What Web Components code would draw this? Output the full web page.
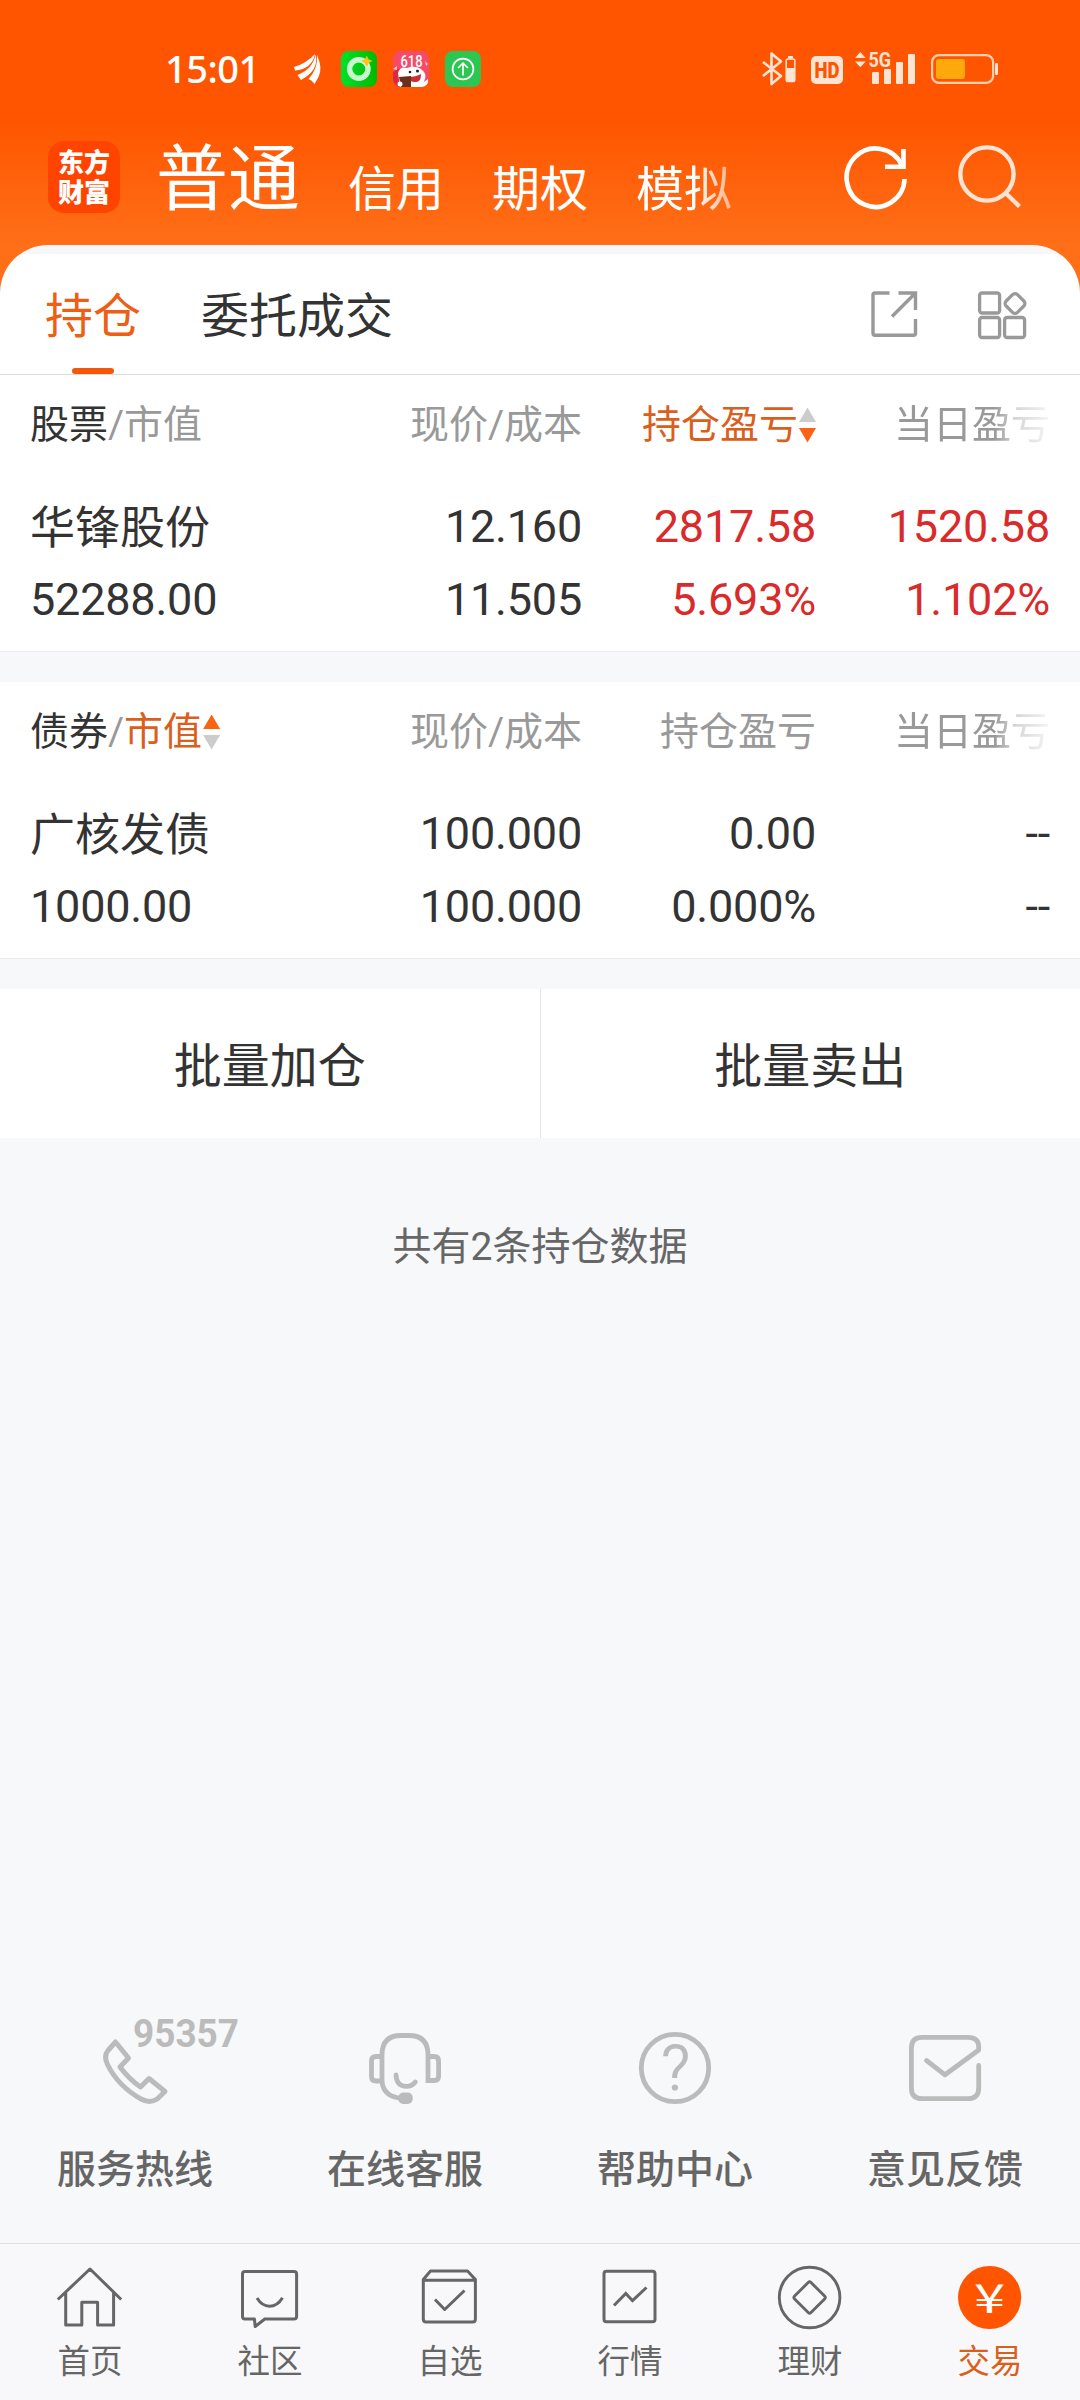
<!DOCTYPE html>
<html lang="zh-CN">
<head>
<meta charset="utf-8">
<title>持仓</title>
<style>
html,body{margin:0;padding:0}
body{width:1080px;height:2400px;overflow:hidden;background:#f7f8fa;color:#333;font-family:Roboto,"Noto Sans CJK SC",sans-serif;font-weight:400}
</style>
</head>
<body>
<trade-app></trade-app>
<script>
const define = (name, html) => {
  const tpl = document.createElement('template');
  tpl.innerHTML = html;
  customElements.define(name, class extends HTMLElement {
    constructor() {
      super();
      this.attachShadow({mode: 'open'}).appendChild(tpl.content.cloneNode(true));
    }
  });
};

/* Icon set: each entry is [viewBox, markup]; drawn in currentColor. */
const ICONS = {
  refresh: ['842 144 68 68', '<g fill="none" stroke="currentColor" stroke-width="4.6"><path d="M904.6 179A29 29.2 0 1 1 902 165.500"/><path d="M885 166.700H903.500V149"/></g>'],
  search: ['956 142 68 68', '<g fill="none" stroke="currentColor" stroke-width="4.4"><circle cx="987" cy="174" r="26.600"/><path d="M1005.500 193L1019.500 206.500"/></g>'],
  share: ['868 288 52 52', '<g fill="none" stroke="currentColor" stroke-width="3.4"><path d="M889.500 293H875Q873 293 873 295V333.300Q873 335.300 875 335.300H913.500Q915.500 335.300 915.500 333.300V319M898.500 293H915.500V310M914.500 294L892 316.500"/></g>'],
  grid: ['976 288 54 54', '<g fill="none" stroke="currentColor" stroke-width="3.3"><rect x="979.600" y="293" width="20" height="20" rx="2.500"/><rect x="979.600" y="317.500" width="20" height="20" rx="2.500"/><rect x="1004.600" y="317.500" width="20" height="20" rx="2.500"/><rect x="1007" y="295.500" width="16" height="16" rx="3.500" transform="rotate(45 1015 303.500)"/></g>'],
  phone: ['95 2012 150 100', '<path fill="none" stroke="currentColor" stroke-width="5" stroke-linejoin="round" d="M115.500 2042L128.500 2058L120 2067Q129 2079 140.500 2087L149 2078.500L165 2091.500L157.500 2098.800Q150 2104 141 2099Q118 2086 107.500 2064.500Q103.500 2056 108 2050.500Z"/><text x="133" y="2047" font-family="Roboto" font-weight="700" font-size="38" textLength="106" lengthAdjust="spacingAndGlyphs" fill="currentColor">95357</text>'],
  headset: ['330 2012 150 100', '<g fill="none" stroke="currentColor" stroke-width="4.800" stroke-linecap="round"><path d="M398.500 2098Q382 2095 382 2079.500V2055Q382 2035.500 401 2035.500H409Q428 2035.500 428 2055V2080.500H434.500Q438.600 2080.500 438.600 2076V2061Q438.600 2056.500 434 2056.500H428M382 2056.500H376Q371.500 2056.500 371.500 2061V2076.500Q371.500 2081 376 2081H382M396 2075Q396.500 2086.300 406.500 2086.300Q412 2086.300 415.300 2082"/></g><rect x="398.300" y="2092.500" width="14.400" height="11.500" rx="5" fill="currentColor"/>'],
  help: ['600 2012 150 100', '<circle cx="675" cy="2068" r="33.700" fill="none" stroke="currentColor" stroke-width="4.800"/><text x="675.500" y="2090" text-anchor="middle" font-family="Roboto" font-weight="300" font-size="63" fill="currentColor" stroke="currentColor" stroke-width="1.2">?</text>'],
  mail: ['870 2012 150 100', '<path fill="none" stroke="currentColor" stroke-width="4.800" stroke-linecap="round" stroke-linejoin="round" d="M978.700 2065.500V2088Q978.700 2098.700 968 2098.700H922Q911.400 2098.700 911.400 2088V2048Q911.400 2037.400 922 2037.400H968Q978.700 2037.400 978.700 2047V2050L945 2074.800L926.500 2060.500"/>'],
  home: ['54 2262 72 72', '<g fill="none" stroke="currentColor" stroke-width="3" stroke-linejoin="round"><path d="M57.800 2299.500L90 2269L121.200 2299.500M65.700 2293V2325H81.800V2302.300H97.600V2325H113.600V2293"/></g>'],
  chat: ['234 2262 72 72', '<g fill="none" stroke="currentColor" stroke-width="3" stroke-linejoin="round"><path d="M245 2271.500H294Q296.600 2271.500 296.600 2274V2316.500Q296.600 2319 294 2319H264.800L255.200 2326.500L254.400 2319H245Q242.500 2319 242.500 2316.500V2274Q242.500 2271.500 245 2271.500Z"/><path d="M257 2298Q262 2306.200 269.500 2306.200Q277.500 2306.200 282.500 2297.700"/></g>'],
  pick: ['414 2262 72 72', '<g fill="none" stroke="currentColor" stroke-width="3" stroke-linejoin="round"><path d="M423.300 2279.500L430.500 2271H467.500L475.400 2279.500V2319Q475.400 2322 472.500 2322H426.300Q423.300 2322 423.300 2319ZM423.300 2280.300H475.400M435 2299.500L444.700 2309.500L464.500 2290.500"/></g>'],
  chart: ['594 2262 72 72', '<g fill="none" stroke="currentColor" stroke-width="3"><rect x="604" y="2271.200" width="51" height="50.600" rx="2.500"/><path d="M614 2305.500L625.800 2293.500L632.500 2300.700L646.500 2287.500"/></g>'],
  coin: ['774 2262 72 72', '<g fill="none" stroke="currentColor" stroke-width="2.900"><circle cx="809.600" cy="2297.500" r="30.300"/><rect x="798" y="2285.900" width="23.200" height="23.200" rx="2" transform="rotate(45 809.600 2297.500)"/></g>'],
  trade: ['954 2262 72 72', '<circle cx="989.600" cy="2297.500" r="31.600" fill="#ff5500"/><text x="989.500" y="2313" text-anchor="middle" font-family="Noto Sans CJK SC" font-size="40" textLength="31" lengthAdjust="spacingAndGlyphs" fill="#fff">¥</text>'],
  notices: ['290 46 195 46', `
    <g fill="#fff"><path d="M294 67Q307 63 315 54Q312 69 295 70.500Z"/><path d="M297.500 75Q313 69 315.500 54.500Q319.500 70 301 80Z"/><path d="M308.500 79Q318 69 317 55Q323 68 318.500 77L314.500 84Q312 80 308.500 79Z"/></g>
    <defs><linearGradient id="g" x1="0" x2="1"><stop stop-color="#00e12c"/><stop offset="1" stop-color="#00b900"/></linearGradient></defs>
    <rect x="341" y="51" width="36" height="36" rx="8" fill="url(#g)"/><circle cx="358.800" cy="69" r="9.200" fill="none" stroke="#c8f8cc" stroke-width="5.400"/><path d="M366.800 56.500Q367.400 60.500 371.500 61Q367.400 62 366.800 66Q366 62 362 61Q366 60.500 366.800 56.500Z" fill="#ffc01a" stroke="#ffc01a"/>
    <clipPath id="c"><rect x="393" y="51" width="36" height="36" rx="8"/></clipPath><g clip-path="url(#c)"><rect x="393" y="51" width="36" height="36" fill="#f54a68"/><path d="M393 72Q400 66 406 70V87H393Z" fill="#d92a40"/><path d="M398 73Q400 66 407 68Q415 65 421 69Q428 74 424 82L428 79V87H400Z" fill="#fff"/><path d="M408 77Q416 77 421 74Q421 83 415 82Q409 82 408 77Z" fill="#c92d32"/><circle cx="410" cy="72" r="1.300" fill="#222"/><circle cx="417.500" cy="71" r="1.500" fill="#222"/><path d="M399 77L411 76V87H401Z" fill="#69311b"/><circle cx="400" cy="84" r="2.500" fill="#fff"/><path d="M393 69L397 66L397 70ZM425 61L428 64L426 66Z" fill="#ffc1c8"/><text x="411.500" y="67" text-anchor="middle" font-family="Roboto" font-weight="500" font-size="17" textLength="22" lengthAdjust="spacingAndGlyphs" fill="#fff">618</text></g>
    <rect x="445" y="51" width="36" height="36" rx="8" fill="#2dc653"/><g fill="none" stroke="#fff" stroke-width="1.700"><circle cx="463" cy="69" r="10.400"/><path d="M463 75.500V63.500M458 68L463 63.200L468 68"/></g>`],
  system: ['760 48 242 42', `
    <g fill="none" stroke="#ffe3d3" stroke-width="2.600" stroke-linejoin="round"><path d="M763 62L781 76L771.500 84V53.500L781 61.500L763 76"/><rect x="786.200" y="59" width="8.600" height="22.500" rx="1.800" stroke-width="1.500"/></g><rect x="788" y="56" width="5" height="2.500" fill="#ffe3d3"/><rect x="786" y="68" width="9" height="14" rx="1.500" fill="#ffe3d3"/>
    <rect x="811" y="56" width="32" height="28" rx="5" fill="#ffe3d3"/><text x="827" y="78" text-anchor="middle" font-family="Roboto" font-weight="900" font-size="21.500" textLength="25" lengthAdjust="spacingAndGlyphs" fill="#ff5500">HD</text>
    <g fill="#ffe3d3"><path d="M855 58L860.300 52L865.700 58ZM855 61.500H865.700L860.300 67.300Z"/><text x="868.500" y="67" font-family="Roboto" font-weight="700" font-size="20.500" textLength="22.500" lengthAdjust="spacingAndGlyphs">5G</text><rect x="872" y="72" width="7" height="12" rx="1"/><rect x="884" y="69" width="7" height="15" rx="1"/><rect x="896" y="62" width="7" height="22" rx="1"/><rect x="908" y="54" width="7" height="30" rx="1"/><rect x="995" y="63" width="3" height="12" rx="1"/></g>
    <rect x="932.100" y="55.100" width="61" height="27.800" rx="7" fill="none" stroke="#ffd0ac" stroke-width="2.200"/><rect x="936" y="59" width="29" height="20" rx="3" fill="#ffa90c"/>`]
};
customElements.define('line-icon', class extends HTMLElement {
  connectedCallback() {
    const [box, art] = ICONS[this.getAttribute('name')];
    const [, , w, h] = box.split(' ');
    const root = this.shadowRoot || this.attachShadow({mode: 'open'});
    root.innerHTML = `<style>:host{display:block;flex:none;width:${w}px;height:${h}px}svg{display:block}</style><svg width="${w}" height="${h}" viewBox="${box}">${art}</svg>`;
  }
});

define('status-bar', `<style>
:host{display:flex;align-items:center;height:138px;box-sizing:border-box;padding:0 78px 0 165px;color:#fff}
time{font:500 38px/46px "Noto Sans",sans-serif;width:125px;letter-spacing:-.5px;white-space:nowrap;margin-top:-2px}
line-icon[name=system]{margin-left:auto}
</style><time>15:01</time><line-icon name="notices"></line-icon><line-icon name="system"></line-icon>`);

define('brand-logo', `<style>
:host{display:flex;flex:none;justify-content:center;align-items:center;width:72px;height:72px;border-radius:16px;background:#ff4400;color:#fff;font:900 26px/30px "Noto Sans CJK SC",sans-serif}
span{display:block;width:52px;margin-top:-3px}
</style><span>东方财富</span>`);

define('app-header', `<style>
:host{display:flex;height:107px;box-sizing:border-box;padding:0 56px 0 48px;color:#fff}
brand-logo{margin-top:3px}
nav{display:flex;align-items:flex-start;gap:48px;margin-left:36px;height:90px;font-size:48px;line-height:80px;white-space:nowrap}
b{font-weight:400;font-size:72px;margin-top:2px}
nav span{margin-top:12px}
.fade{-webkit-mask-image:linear-gradient(90deg,#000 60%,rgba(0,0,0,.5));mask-image:linear-gradient(90deg,#000 60%,rgba(0,0,0,.5))}
.acts{display:flex;gap:46px;margin:6px 0 0 auto}
line-icon[name=search]{color:#ffe3d3;margin-top:-2px}
</style><brand-logo></brand-logo><nav><b>普通</b><span>信用</span><span>期权</span><span class="fade">模拟</span></nav>
<div class="acts"><line-icon name="refresh"></line-icon><line-icon name="search"></line-icon></div>`);

define('page-tabs', `<style>
:host{display:flex;box-sizing:border-box;height:130px;border-bottom:1px solid #ddd;border-radius:48px 48px 0 0;background:linear-gradient(#f7f7fa 9px,#fff 9px);padding:0 50px 0 45px;font-size:48px;color:#333}
div{display:flex;flex-direction:column;align-items:center;justify-content:space-between;line-height:70px;padding-top:37px;margin-right:60px;box-sizing:border-box}
.on{color:#ec5f14}
.on::after{content:"";width:42px;height:6px;border-radius:3px;background:#f4570c}
.acts{flex-direction:row;align-items:flex-start;justify-content:flex-start;margin:0 0 0 auto;padding-top:43px;gap:56px;color:#999}
</style><div class="on">持仓</div><div>委托成交</div><div class="acts"><line-icon name="share"></line-icon><line-icon name="grid"></line-icon></div>`);

define('sort-mark', `<style>
:host{display:inline-flex;flex:none;flex-direction:column;gap:6px;width:17px;margin-left:1px;--up:#ccc;--down:#ccc}
:host([dir=up]){--up:#f96313}:host([dir=down]){--down:#f96313}
i{height:14.500px;background:var(--up);clip-path:polygon(50% 0,100% 100%,0 100%)}
i+i{background:var(--down);clip-path:polygon(0 0,100% 0,50% 100%)}
</style><i></i><i></i>`);

define('holding-table', `<style>
:host{display:block;box-sizing:border-box;height:277px;padding:0 30px;background:#fff;border-bottom:1px solid #ebebed}
.head,.row{display:grid;grid-template-columns:318px repeat(3,234px);white-space:nowrap}
.head{height:100px;line-height:98px;font-size:39px;color:#999}
.row{font-size:45px;line-height:73px;grid-auto-rows:73px;padding-top:15px;color:#333;letter-spacing:-.2px}
::slotted(*){text-align:right}
::slotted(.l){text-align:left}
::slotted(.name){letter-spacing:0;padding-top:2px}
</style><div class="head"><slot name="h"></slot></div><div class="row"><slot></slot></div>`);

define('head-cell', `<style>
:host{display:flex;align-items:center;justify-content:flex-end}
:host(.l){justify-content:flex-start}
:host(.on){color:#d9601c}
:host(.fade){-webkit-mask-image:linear-gradient(90deg,#000 calc(100% - 56px),rgba(0,0,0,.4) calc(100% - 34px),rgba(0,0,0,.1));mask-image:linear-gradient(90deg,#000 calc(100% - 56px),rgba(0,0,0,.4) calc(100% - 34px),rgba(0,0,0,.1))}
::slotted(.dk){color:#333}::slotted(.or){color:#d9601c}
</style><slot></slot>`);

define('batch-actions', `<style>
:host{display:flex;height:149px;background:#fff;font-size:48px;line-height:155px;text-align:center}
div{flex:1;box-sizing:border-box}div:first-of-type{border-right:1px solid #e4e4e8}
</style><div>批量加仓</div><div>批量卖出</div>`);

define('service-item', `<style>
:host{display:flex;flex:1;flex-direction:column;align-items:center;gap:32px;color:#bbb}
div{font-size:39px;font-weight:500;line-height:52px;color:#666}
</style><slot name="icon"></slot><div><slot></slot></div>`);

define('service-row', `<style>
:host{display:flex;height:231px}
.tel{margin-left:70px}
</style>
<service-item><line-icon class="tel" slot="icon" name="phone"></line-icon>服务热线</service-item>
<service-item><line-icon slot="icon" name="headset"></line-icon>在线客服</service-item>
<service-item><line-icon slot="icon" name="help"></line-icon>帮助中心</service-item>
<service-item><line-icon slot="icon" name="mail"></line-icon>意见反馈</service-item>`);

define('nav-item', `<style>
:host{display:flex;flex:1;flex-direction:column;align-items:center;color:#666;font-size:32.500px;line-height:40px;gap:8px}
:host([on]){color:#d9601c}
</style><slot name="icon"></slot><div><slot></slot></div>`);

define('bottom-nav', `<style>
:host{display:flex;box-sizing:border-box;height:157px;border-top:1px solid #e0e0e2;background:#f8f8fa;padding-top:18px}
</style>
<nav-item><line-icon slot="icon" name="home"></line-icon>首页</nav-item>
<nav-item><line-icon slot="icon" name="chat"></line-icon>社区</nav-item>
<nav-item><line-icon slot="icon" name="pick"></line-icon>自选</nav-item>
<nav-item><line-icon slot="icon" name="chart"></line-icon>行情</nav-item>
<nav-item><line-icon slot="icon" name="coin"></line-icon>理财</nav-item>
<nav-item on><line-icon slot="icon" name="trade"></line-icon>交易</nav-item>`);

define('trade-app', `<style>
:host{display:flex;flex-direction:column;width:1080px;height:2400px}
.top{background:linear-gradient(#ff5500 0,#ff5500 120px,#ff6f18 245px,#ff6f18);height:375px;flex:none}
.gap{height:30px;flex:none}
.red{color:#d92b2b}
.count{margin:0;text-align:center;font-size:39px;line-height:52px;color:#666;padding-top:83px;flex:1}
</style>
<div class="top"><status-bar></status-bar><app-header></app-header><page-tabs></page-tabs></div>
<holding-table>
<head-cell slot="h" class="l"><span class="dk">股票</span><span>/市值</span></head-cell>
<head-cell slot="h">现价/成本</head-cell>
<head-cell slot="h" class="on">持仓盈亏<sort-mark dir="down"></sort-mark></head-cell>
<head-cell slot="h" class="fade">当日盈亏</head-cell>
<span class="l name">华锋股份</span><span>12.160</span><span class="red">2817.58</span><span class="red">1520.58</span>
<span class="l">52288.00</span><span>11.505</span><span class="red">5.693%</span><span class="red">1.102%</span>
</holding-table>
<div class="gap"></div>
<holding-table>
<head-cell slot="h" class="l"><span class="dk">债券</span><span>/</span><span class="or">市值</span><sort-mark dir="up"></sort-mark></head-cell>
<head-cell slot="h">现价/成本</head-cell>
<head-cell slot="h">持仓盈亏</head-cell>
<head-cell slot="h" class="fade">当日盈亏</head-cell>
<span class="l name">广核发债</span><span>100.000</span><span>0.00</span><span>--</span>
<span class="l">1000.00</span><span>100.000</span><span>0.000%</span><span>--</span>
</holding-table>
<div class="gap"></div>
<batch-actions></batch-actions>
<p class="count">共有2条持仓数据</p>
<service-row></service-row>
<bottom-nav></bottom-nav>`);
</script>
</body>
</html>
